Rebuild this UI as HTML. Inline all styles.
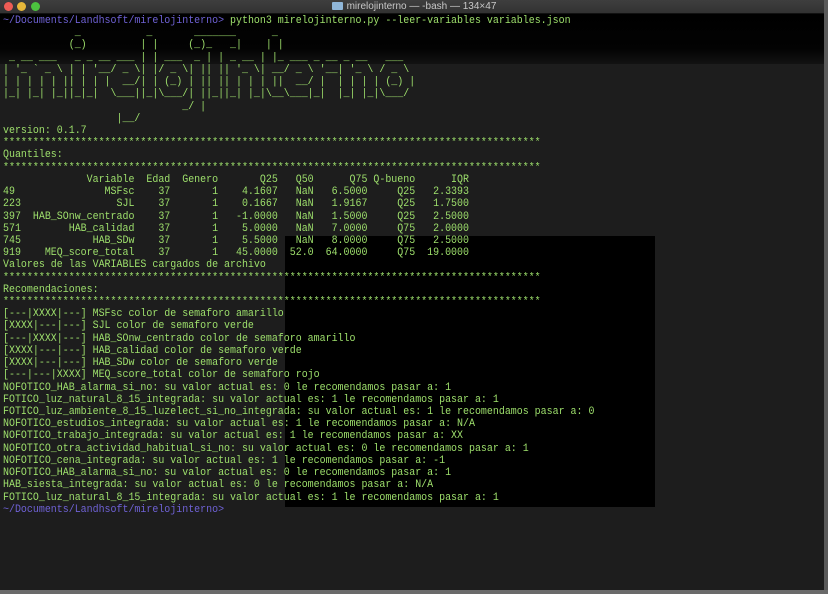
<!DOCTYPE html>
<html><head><meta charset="utf-8">
<style>
html,body{margin:0;padding:0;}
body{width:828px;height:594px;overflow:hidden;background:#1d1d1d;position:relative;font-family:"Liberation Mono",monospace;}
.title{position:absolute;left:0;top:0;width:828px;height:13px;background:linear-gradient(#3e3e3e,#323232);border-bottom:1px solid #111;}
.dot{position:absolute;top:2px;width:9px;height:9px;border-radius:50%;}
.ttext{position:absolute;left:0;width:828px;top:0;text-align:center;font:10px/13px "Liberation Sans",sans-serif;color:#c8c8c8;}
.folder{display:inline-block;width:11px;height:8px;background:#8fb6d8;vertical-align:-1px;margin-right:4px;border-radius:1px;}
.topblack{position:absolute;left:0;top:14px;width:824px;height:50px;background:linear-gradient(#000 0,#030303 70%,#121212 100%);}
.blackbox{position:absolute;left:285px;top:236px;width:370px;height:271px;background:#000;}
.rightcol{position:absolute;left:824px;top:0;width:4px;height:594px;background:#5a5a5a;}
.bottom{position:absolute;left:0;top:590px;width:828px;height:4px;background:#6a6a6a;}
pre{position:absolute;left:3px;top:15px;margin:0;font-family:"Liberation Mono",monospace;font-size:11px;line-height:12.225px;color:#9ee06c;white-space:pre;transform:scaleX(0.905);transform-origin:0 0;}
.p{color:#6f62d6;}
</style></head><body>
<div class="title">
<div class="dot" style="left:4px;background:#ee5c55"></div>
<div class="dot" style="left:17px;background:#e7b73a"></div>
<div class="dot" style="left:31px;background:#4cc23f"></div>
<div class="ttext"><span class="folder"></span>mirelojinterno — -bash — 134×47</div>
</div>
<div class="topblack"></div>
<div class="blackbox"></div>
<div class="rightcol"></div>
<div class="bottom"></div>
<pre><span class="p">~/Documents/Landhsoft/mirelojinterno&gt;</span> python3 mirelojinterno.py --leer-variables variables.json
            _           _       _______      _
           (_)         | |     (_)_   _|    | |
 _ __ ___   _ _ __ ___ | | ___  _ | | _ __ | |_ ___ _ __ _ __   ___
| '_ ` _ \ | | '__/ _ \| |/ _ \| || || '_ \| __/ _ \ '__| '_ \ / _ \
| | | | | || | | |  __/| | (_) | || || | | | ||  __/ |  | | | | (_) |
|_| |_| |_||_|_|  \___||_|\___/| ||_||_| |_|\__\___|_|  |_| |_|\___/
                              _/ |
                   |__/
version: 0.1.7
******************************************************************************************
Quantiles:
******************************************************************************************
              Variable  Edad  Genero       Q25   Q50      Q75 Q-bueno      IQR
49               MSFsc    37       1    4.1607   NaN   6.5000     Q25   2.3393
223                SJL    37       1    0.1667   NaN   1.9167     Q25   1.7500
397  HAB_SOnw_centrado    37       1   -1.0000   NaN   1.5000     Q25   2.5000
571        HAB_calidad    37       1    5.0000   NaN   7.0000     Q75   2.0000
745            HAB_SDw    37       1    5.5000   NaN   8.0000     Q75   2.5000
919    MEQ_score_total    37       1   45.0000  52.0  64.0000     Q75  19.0000
Valores de las VARIABLES cargados de archivo
******************************************************************************************
Recomendaciones:
******************************************************************************************
[---|XXXX|---] MSFsc color de semaforo amarillo
[XXXX|---|---] SJL color de semaforo verde
[---|XXXX|---] HAB_SOnw_centrado color de semaforo amarillo
[XXXX|---|---] HAB_calidad color de semaforo verde
[XXXX|---|---] HAB_SDw color de semaforo verde
[---|---|XXXX] MEQ_score_total color de semaforo rojo
NOFOTICO_HAB_alarma_si_no: su valor actual es: 0 le recomendamos pasar a: 1
FOTICO_luz_natural_8_15_integrada: su valor actual es: 1 le recomendamos pasar a: 1
FOTICO_luz_ambiente_8_15_luzelect_si_no_integrada: su valor actual es: 1 le recomendamos pasar a: 0
NOFOTICO_estudios_integrada: su valor actual es: 1 le recomendamos pasar a: N/A
NOFOTICO_trabajo_integrada: su valor actual es: 1 le recomendamos pasar a: XX
NOFOTICO_otra_actividad_habitual_si_no: su valor actual es: 0 le recomendamos pasar a: 1
NOFOTICO_cena_integrada: su valor actual es: 1 le recomendamos pasar a: -1
NOFOTICO_HAB_alarma_si_no: su valor actual es: 0 le recomendamos pasar a: 1
HAB_siesta_integrada: su valor actual es: 0 le recomendamos pasar a: N/A
FOTICO_luz_natural_8_15_integrada: su valor actual es: 1 le recomendamos pasar a: 1
<span class="p">~/Documents/Landhsoft/mirelojinterno&gt;</span></pre>
</body></html>
